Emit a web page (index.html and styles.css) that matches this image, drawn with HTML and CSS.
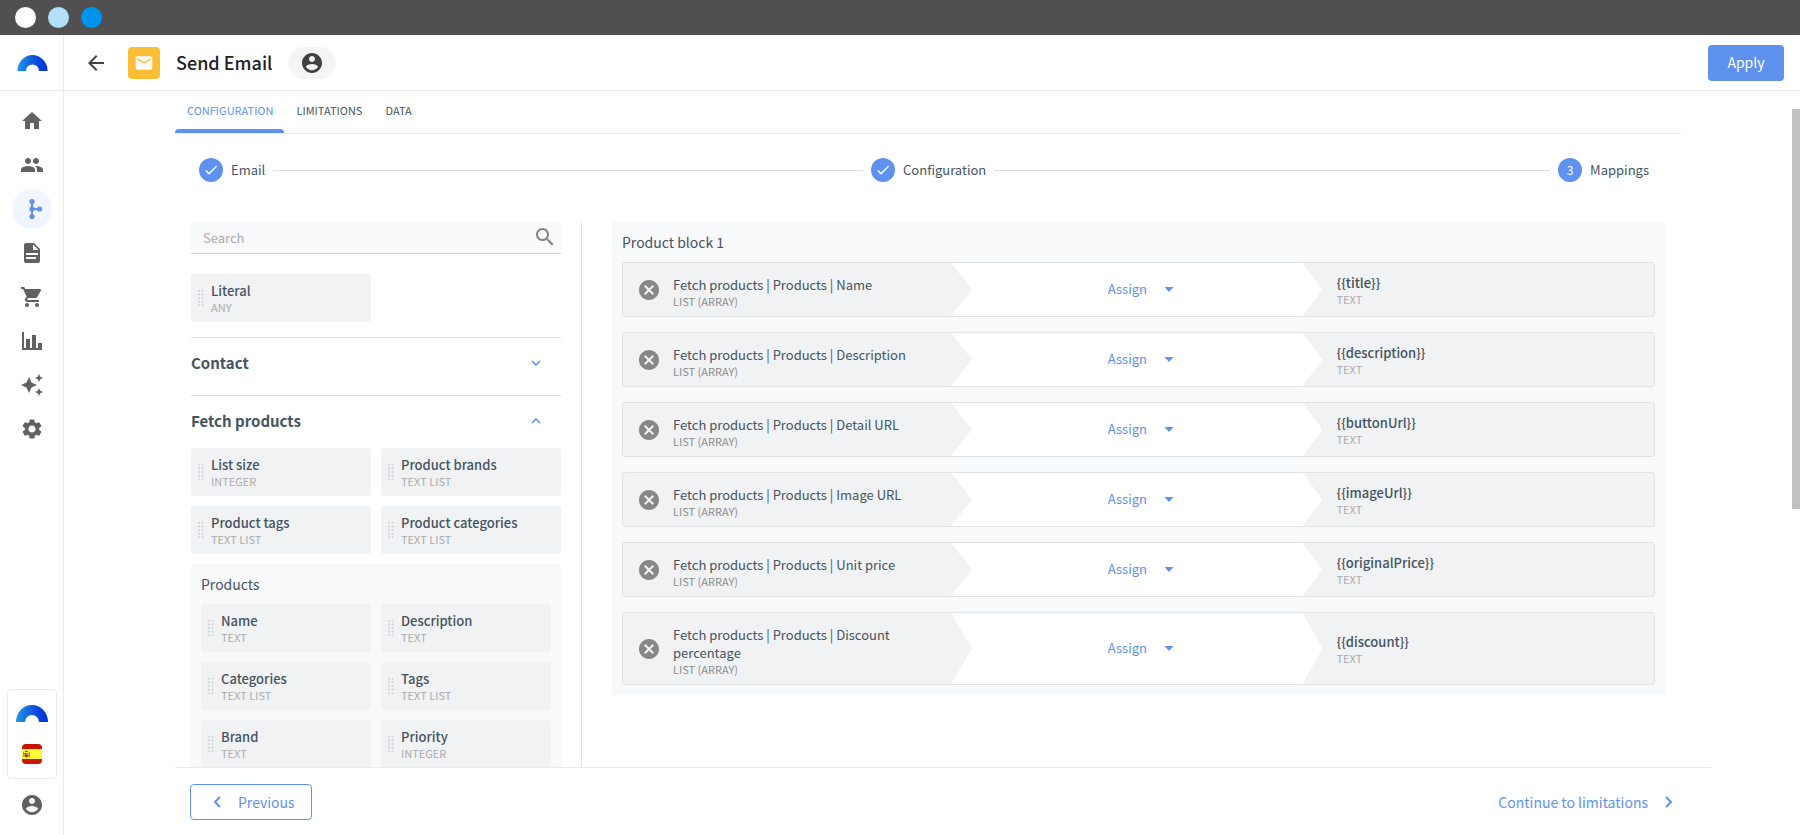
FILE: index.html
```html
<!DOCTYPE html>
<html lang="en">
<head>
<meta charset="UTF-8">
<title>Send Email</title>
<link rel="stylesheet" href="styles.css">
</head>
<body>
<svg class="defs" aria-hidden="true">
  <defs>
    <linearGradient id="arcfill" x1="0" x2="1" y1="0" y2="0">
      <stop offset="0" stop-color="#2196e8"/>
      <stop offset=".7" stop-color="#0a44dc"/>
      <stop offset="1" stop-color="#0033d6"/>
    </linearGradient>
    <symbol id="arc" viewBox="0 0 32 17">
      <path fill="url(#arcfill)" d="M0 17a16 17 0 0 1 32 0h-9a7 7 0 0 0-14 0z"/>
    </symbol>
    <symbol id="grip" viewBox="0 0 6 16">
      <path stroke="#c9cccf" stroke-width="1.6" stroke-dasharray="1.6 2" d="M1 0v16M4.600 0v16"/>
    </symbol>
    <symbol id="account" viewBox="0 0 24 24">
      <path d="M12 2C6.480 2 2 6.480 2 12s4.480 10 10 10 10-4.480 10-10S17.520 2 12 2zm0 3c1.660 0 3 1.340 3 3s-1.340 3-3 3-3-1.340-3-3 1.340-3 3-3zm0 14.200c-2.500 0-4.710-1.280-6-3.220.03-1.990 4-3.080 6-3.080 1.990 0 5.970 1.090 6 3.080-1.290 1.940-3.500 3.220-6 3.220z"/>
    </symbol>
    <symbol id="cancel" viewBox="0 0 24 24">
      <path d="M12 2C6.470 2 2 6.470 2 12s4.470 10 10 10 10-4.470 10-10S17.530 2 12 2zm5 13.590L15.590 17 12 13.410 8.410 17 7 15.590 10.590 12 7 8.410 8.410 7 12 10.590 15.590 7 17 8.410 13.410 12 17 15.590z"/>
    </symbol>
    <symbol id="check" viewBox="0 0 24 24">
      <path d="M9 16.170L4.830 12l-1.420 1.410L9 19 21 7l-1.410-1.410z"/>
    </symbol>
    <symbol id="caret" viewBox="0 0 24 24">
      <path d="M7.500 9l4.500 5 4.500-5z"/>
    </symbol>
  </defs>
</svg>

<div class="titlebar">
  <span class="dot dot-white"></span>
  <span class="dot dot-light"></span>
  <span class="dot dot-blue"></span>
</div>

<div class="app">
  <aside class="sidebar">
    <a class="logo" href="#" aria-label="Home page"><svg width="31" height="16"><use href="#arc"/></svg></a>
    <nav class="menu">
      <a href="#" aria-label="Home"><svg viewBox="0 0 24 24"><path d="M10 20v-6h4v6h5v-8h3L12 3 2 12h3v8z"/></svg></a>
      <a href="#" aria-label="Contacts"><svg viewBox="0 0 24 24"><path d="M16 11c1.660 0 2.990-1.340 2.990-3S17.660 5 16 5c-1.660 0-3 1.340-3 3s1.340 3 3 3zm-8 0c1.660 0 2.990-1.340 2.990-3S9.660 5 8 5C6.340 5 5 6.340 5 8s1.340 3 3 3zm0 2c-2.330 0-7 1.170-7 3.500V19h14v-2.500c0-2.330-4.670-3.500-7-3.500zm8 0c-.29 0-.62.02-.97.05 1.160.84 1.970 1.970 1.970 3.450V19h6v-2.500c0-2.330-4.670-3.500-7-3.500z"/></svg></a>
      <a class="active" href="#" aria-label="Workflows"><svg viewBox="0 0 24 24"><path fill="none" stroke="#5e92ee" stroke-width="2" d="M12 4v16M12 12h8"/><circle cx="12" cy="4.500" r="2.600"/><circle cx="12" cy="12" r="2.600"/><circle cx="12" cy="19.500" r="2.600"/><circle cx="19.500" cy="12" r="2.600"/></svg></a>
      <a href="#" aria-label="Content"><svg viewBox="0 0 24 24"><path d="M14 2H6c-1.100 0-1.990.9-1.990 2L4 20c0 1.100.89 2 1.990 2H18c1.100 0 2-.9 2-2V8l-6-6zm2 16H6v-2h10v2zm2-4H6v-2h12v2zm-5-5V3.500L18.500 9H13z"/></svg></a>
      <a href="#" aria-label="Products"><svg viewBox="0 0 24 24"><path d="M7 18c-1.100 0-1.990.9-1.990 2S5.900 22 7 22s2-.9 2-2-.9-2-2-2zM1 2v2h2l3.600 7.590-1.350 2.450c-.16.28-.25.61-.25.96 0 1.100.9 2 2 2h12v-2H7.420c-.14 0-.25-.11-.25-.25l.03-.12.9-1.630h7.450c.75 0 1.410-.41 1.750-1.030l3.580-6.490c.08-.14.12-.31.12-.48 0-.55-.45-1-1-1H5.210l-.94-2H1zm16 16c-1.100 0-1.990.9-1.990 2s.89 2 1.990 2 2-.9 2-2-.9-2-2-2z"/></svg></a>
      <a href="#" aria-label="Reports"><svg viewBox="0 0 24 24"><path d="M2 3h2v16h2v-9h4v9h2V6h4v13h2v-5h4v7H2z"/></svg></a>
      <a href="#" aria-label="AI"><svg viewBox="0 0 24 24"><path d="M19 9l1.250-2.750L23 5l-2.750-1.250L19 1l-1.250 2.750L15 5l2.750 1.250L19 9zm-7.500.5L9 4 6.500 9.500 1 12l5.500 2.500L9 20l2.500-5.500L17 12l-5.500-2.500zM19 15l-1.250 2.750L15 19l2.750 1.250L19 23l1.250-2.750L23 19l-2.750-1.250L19 15z"/></svg></a>
      <a href="#" aria-label="Settings"><svg viewBox="0 0 24 24"><path d="M19.140 12.940c.04-.3.06-.61.06-.94 0-.32-.02-.64-.07-.94l2.030-1.580c.18-.14.23-.41.12-.61l-1.920-3.320c-.12-.22-.37-.29-.59-.22l-2.390.96c-.5-.38-1.030-.7-1.620-.94l-.36-2.540c-.04-.24-.24-.41-.48-.41h-3.840c-.24 0-.43.17-.47.41l-.36 2.540c-.59.24-1.130.57-1.620.94l-2.390-.96c-.22-.08-.47 0-.59.22L2.740 8.870c-.12.21-.08.47.12.61l2.030 1.580c-.05.3-.09.63-.09.94s.02.64.07.94l-2.030 1.580c-.18.14-.23.41-.12.61l1.920 3.320c.12.22.37.29.59.22l2.390-.96c.5.38 1.030.7 1.620.94l.36 2.540c.05.24.24.41.48.41h3.840c.24 0 .44-.17.47-.41l.36-2.540c.59-.24 1.130-.56 1.620-.94l2.390.96c.22.08.47 0 .59-.22l1.920-3.320c.12-.22.07-.47-.12-.61l-2.010-1.580zM12 15.600c-1.980 0-3.600-1.620-3.600-3.600s1.620-3.600 3.600-3.600 3.600 1.620 3.600 3.600-1.620 3.600-3.600 3.600z"/></svg></a>
    </nav>
    <div class="workspace">
      <svg width="32" height="17"><use href="#arc"/></svg>
      <svg class="flag" width="20" height="20" viewBox="0 0 20 20">
        <path fill="#c81400" d="M0 0h20v20H0z"/>
        <path fill="#ffff33" d="M0 5h20v10H0z"/>
        <path fill="#b98a4a" d="M1 8h1v5H1zM7 8h1v5H7z"/>
        <path fill="#b5322a" d="M3 7h3v1H3zM2.500 9h4v3.500l-2 1-2-1z"/>
        <path fill="#d98f86" d="M4.500 9h2v2h-2z"/>
      </svg>
    </div>
    <a class="profile" href="#" aria-label="Profile"><svg><use href="#account"/></svg></a>
  </aside>

  <main class="main">
    <header class="header">
      <button class="back" type="button" aria-label="Back"><svg viewBox="0 0 24 24"><path d="M20 11H7.830l5.590-5.590L12 4l-8 8 8 8 1.410-1.410L7.830 13H20v-2z"/></svg></button>
      <span class="mail"><svg viewBox="0 0 24 24"><path d="M20 4H4c-1.100 0-1.990.9-1.990 2L2 18c0 1.100.9 2 2 2h16c1.100 0 2-.9 2-2V6c0-1.100-.9-2-2-2zm0 4l-8 5-8-5V6l8 5 8-5v2z"/></svg></span>
      <h1>Send Email</h1>
      <button class="owner" type="button" aria-label="Owner"><svg><use href="#account"/></svg></button>
      <button class="apply" type="button">Apply</button>
    </header>

    <div class="body">
      <nav class="tabs">
        <a class="selected" href="#">CONFIGURATION</a>
        <a href="#">LIMITATIONS</a>
        <a href="#">DATA</a>
      </nav>

      <ol class="stepper">
        <li class="step-first"><span class="bullet"><svg><use href="#check"/></svg></span>Email</li>
        <li class="step-second"><span class="bullet"><svg><use href="#check"/></svg></span>Configuration</li>
        <li><span class="bullet">3</span>Mappings</li>
      </ol>

      <div class="columns">
        <section class="fields">
          <label class="search">
            <input type="text" placeholder="Search" aria-label="Search">
            <svg viewBox="0 0 24 24"><path d="M15.500 14h-.79l-.28-.27C15.410 12.590 16 11.110 16 9.500 16 5.910 13.090 3 9.500 3S3 5.910 3 9.500 5.910 16 9.500 16c1.610 0 3.090-.59 4.230-1.570l.27.28v.79l5 4.990L20.490 19l-4.990-5zm-6 0C7.010 14 5 11.990 5 9.500S7.010 5 9.500 5 14 7.010 14 9.500 11.990 14 9.500 14z"/></svg>
          </label>

          <div class="cards literal">
            <div class="card"><svg><use href="#grip"/></svg><p><b>Literal</b><small>ANY</small></p></div>
          </div>

          <div class="group">
            <h2>Contact <button type="button" aria-label="Expand Contact"><svg viewBox="0 0 10 6"><path d="M1 1l4 4 4-4"/></svg></button></h2>
          </div>

          <div class="group">
            <h2>Fetch products <button type="button" aria-label="Collapse Fetch products"><svg viewBox="0 0 10 6"><path d="M1 5l4-4 4 4"/></svg></button></h2>
            <div class="cards">
              <div class="card"><svg><use href="#grip"/></svg><p><b>List size</b><small>INTEGER</small></p></div>
              <div class="card"><svg><use href="#grip"/></svg><p><b>Product brands</b><small>TEXT LIST</small></p></div>
              <div class="card"><svg><use href="#grip"/></svg><p><b>Product tags</b><small>TEXT LIST</small></p></div>
              <div class="card"><svg><use href="#grip"/></svg><p><b>Product categories</b><small>TEXT LIST</small></p></div>
            </div>
            <div class="block">
              <h3>Products</h3>
              <div class="cards">
                <div class="card"><svg><use href="#grip"/></svg><p><b>Name</b><small>TEXT</small></p></div>
                <div class="card"><svg><use href="#grip"/></svg><p><b>Description</b><small>TEXT</small></p></div>
                <div class="card"><svg><use href="#grip"/></svg><p><b>Categories</b><small>TEXT LIST</small></p></div>
                <div class="card"><svg><use href="#grip"/></svg><p><b>Tags</b><small>TEXT LIST</small></p></div>
                <div class="card"><svg><use href="#grip"/></svg><p><b>Brand</b><small>TEXT</small></p></div>
                <div class="card"><svg><use href="#grip"/></svg><p><b>Priority</b><small>INTEGER</small></p></div>
              </div>
            </div>
          </div>
        </section>

        <section class="mappings">
          <div class="block">
            <h3>Product block 1</h3>
            <div class="rows" id="rows"></div>
          </div>
        </section>
      </div>
      <div class="scrollbar"></div>
    </div>

    <footer class="footer">
      <button class="previous" type="button"><svg viewBox="0 0 8 12"><path d="M7 1L2 6l5 5"/></svg>Previous</button>
      <a class="next" href="#">Continue to limitations<svg viewBox="0 0 8 12"><path d="M1 1l5 5-5 5"/></svg></a>
    </footer>
  </main>
</div>

<script>
const mappings = [
  ['Name', 'title'],
  ['Description', 'description'],
  ['Detail URL', 'buttonUrl'],
  ['Image URL', 'imageUrl'],
  ['Unit price', 'originalPrice'],
  ['Discount percentage', 'discount']
];

const rows = document.getElementById('rows');
mappings.forEach(([field, target]) => {
  const row = document.createElement('div');
  row.className = 'row';
  row.innerHTML = `
    <div class="source">
      <button type="button" aria-label="Remove ${field}"><svg><use href="#cancel"/></svg></button>
      <p>Fetch products | Products | ${field}<small>LIST (ARRAY)</small></p>
    </div>
    <div class="assign">
      <select aria-label="Action for ${target}"><option>Assign</option></select>
      <svg><use href="#caret"/></svg>
    </div>
    <div class="target"><p><b>{{${target}}}</b><small>TEXT</small></p></div>
  `;
  rows.appendChild(row);
});
</script>
</body>
</html>
```
FILE: styles.css
```css
* {
  box-sizing: border-box;
}
body {
  margin: 0;
  height: 100vh;
  display: flex;
  flex-direction: column;
  overflow: hidden;
  background: #fff;
  color: #455460;
  font-family: "Noto Sans CJK SC", sans-serif;
  font-size: 13px;
  line-height: 18px;
}
h1, h2, h3, p, ol {
  margin: 0;
  padding: 0;
}
a {
  color: inherit;
  text-decoration: none;
}
button, input, select {
  font: inherit;
  color: inherit;
  border: 0;
  background: none;
  padding: 0;
  margin: 0;
}
button {
  cursor: pointer;
}
svg {
  display: block;
  flex: none;
}
b {
  display: block;
  font-weight: 500;
}
small {
  display: block;
  font-size: 11px;
  line-height: 14px;
  color: #a9abad;
}
.defs {
  position: absolute;
  width: 0;
  height: 0;
}

.titlebar {
  flex: none;
  height: 35px;
  padding: 0 15px;
  display: flex;
  align-items: center;
  gap: 12px;
  background: #505050;
}
.dot {
  width: 21px;
  height: 21px;
  border-radius: 50%;
}
.dot-white { background: #fff; }
.dot-light { background: #b3dff8; }
.dot-blue { background: #0093ec; }

.app {
  flex: 1;
  min-height: 0;
  display: flex;
}

/* sidebar */
.sidebar {
  flex: none;
  width: 64px;
  display: flex;
  flex-direction: column;
  align-items: center;
  border-right: 1px solid #ebebeb;
}
.logo {
  width: 100%;
  height: 56px;
  padding-left: 2px;
  display: flex;
  align-items: center;
  justify-content: center;
  border-bottom: 1px solid #ebebeb;
}
.menu {
  margin-top: 10px;
  display: flex;
  flex-direction: column;
  gap: 4px;
}
.menu a {
  width: 40px;
  height: 40px;
  display: flex;
  align-items: center;
  justify-content: center;
  border-radius: 50%;
}
.menu svg, .profile svg {
  width: 24px;
  height: 24px;
  fill: #616161;
}
.menu .active {
  background: #f0f5fe;
}
.menu .active svg {
  fill: #5e92ee;
}
.workspace {
  width: 50px;
  height: 90px;
  margin-top: auto;
  padding-top: 15px;
  display: flex;
  flex-direction: column;
  align-items: center;
  gap: 22px;
  border: 1px solid #ebebeb;
  border-radius: 4px;
}
.flag {
  border-radius: 4px;
}
.profile {
  margin: 14px 0 18px;
}

/* header */
.main {
  flex: 1;
  min-width: 0;
  display: flex;
  flex-direction: column;
}
.header {
  flex: none;
  height: 56px;
  padding: 0 16px 0 20px;
  display: flex;
  align-items: center;
  border-bottom: 1px solid #ebebeb;
}
.back svg, .owner svg {
  width: 24px;
  height: 24px;
  fill: #424242;
}
.mail {
  width: 32px;
  height: 32px;
  margin: 0 16px 0 20px;
  display: flex;
  align-items: center;
  justify-content: center;
  border-radius: 4px;
  background: #f9be34;
}
.mail svg {
  width: 20px;
  height: 20px;
  fill: #fafafa;
}
h1 {
  padding-bottom: 2px;
  font-size: 18px;
  line-height: 24px;
  font-weight: 500;
  color: #212121;
}
.owner {
  width: 48px;
  height: 32px;
  margin-left: 16px;
  display: flex;
  align-items: center;
  justify-content: center;
  border-radius: 16px;
  background: #f5f5f5;
}
.apply {
  width: 76px;
  height: 36px;
  margin-left: auto;
  padding-bottom: 2px;
  border-radius: 4px;
  background: #5e92ee;
  color: #fff;
  font-size: 14px;
}

/* tabs and steps */
.body {
  flex: 1;
  min-height: 0;
  position: relative;
  display: flex;
  flex-direction: column;
  padding: 0 119px 0 111px;
}
.scrollbar {
  position: absolute;
  top: 18px;
  right: 0;
  width: 8px;
  height: 400px;
  background: #c1c1c1;
}
.tabs {
  flex: none;
  height: 43px;
  display: flex;
  border-bottom: 1px solid #ebebeb;
}
.tabs a {
  padding: 10px 11px 0 12px;
  font-size: 11px;
}
.tabs .selected {
  position: relative;
  color: #5e92ee;
}
.tabs .selected::after {
  content: "";
  position: absolute;
  left: 0;
  right: 0;
  bottom: 0;
  height: 4px;
  border-radius: 4px 4px 0 0;
  background: #5e92ee;
}
.stepper {
  flex: none;
  margin: 24px 32px 40px 24px;
  display: flex;
  gap: 8px;
  list-style: none;
}
.stepper li {
  display: flex;
  align-items: center;
  gap: 8px;
}
.stepper .step-first {
  flex: 665;
}
.stepper .step-second {
  flex: 680;
}
.step-first::after, .step-second::after {
  content: "";
  flex: 1;
  height: 1px;
  background: #dcdee0;
}
.bullet {
  width: 24px;
  height: 24px;
  display: flex;
  align-items: center;
  justify-content: center;
  border-radius: 50%;
  background: #5e92ee;
  color: #fff;
  font-size: 12px;
}
.bullet svg {
  width: 16px;
  height: 16px;
  fill: #fff;
}

/* columns */
.columns {
  flex: 1;
  min-height: 0;
  overflow: hidden;
  display: flex;
  margin: 0 16px;
}
.fields {
  flex: none;
  width: 391px;
  padding-right: 20px;
  border-right: 1px solid #e0e2e3;
}
.mappings {
  flex: 1;
  padding-left: 30px;
}
.search {
  display: flex;
  height: 32px;
  padding: 0 4px 0 12px;
  border-bottom: 1px solid #c9cfd4;
  background: #f8f9fb;
}
.search input {
  flex: 1;
  min-width: 0;
  outline: 0;
}
.search input::placeholder {
  color: #a9abad;
}
.search svg {
  width: 24px;
  height: 24px;
  margin-top: 3px;
  fill: #858585;
}
.cards {
  display: grid;
  grid-template-columns: 1fr 1fr;
  gap: 10px;
}
.literal {
  margin: 20px 0 15px;
}
.card {
  height: 48px;
  padding: 0 7px;
  display: flex;
  align-items: center;
  gap: 7px;
  border-radius: 3px;
  background: #f1f2f4;
}
.card svg {
  width: 6px;
  height: 16px;
}
.group {
  padding-bottom: 7px;
  border-top: 1px solid #e0e2e3;
}
.group > .cards {
  margin: 2px 0 10px;
}
h2 {
  height: 50px;
  padding-right: 20px;
  display: flex;
  align-items: center;
  justify-content: space-between;
  font-size: 15px;
  font-weight: 700;
}
h2 svg {
  width: 10px;
  height: 6px;
  fill: none;
  stroke: #5e92ee;
  stroke-width: 1.5;
}
.block {
  padding: 0 10px 10px;
  background: #f8f9fb;
}
h3 {
  height: 40px;
  font-size: 14px;
  line-height: 41px;
  font-weight: 400;
}

/* mapping rows */
.rows {
  display: flex;
  flex-direction: column;
  gap: 15px;
}
.row {
  display: grid;
  grid-template-columns: 28fr 30fr 30fr;
  border: 1px solid #e0e2e3;
  border-radius: 3px;
  background: #f1f2f4;
}
.source {
  padding: 6px 20px 6px 14px;
  display: flex;
  align-items: center;
  gap: 12px;
}
.source p {
  padding: 7px 0 2px;
}
.source small {
  color: #8a8c8e;
}
.source svg {
  width: 24px;
  height: 24px;
  fill: #858789;
}
.assign {
  margin-right: -20px;
  padding-left: 15px;
  display: flex;
  align-items: center;
  justify-content: center;
  background: #fff;
  clip-path: polygon(0 0, calc(100% - 20px) 0, 100% 50%, calc(100% - 20px) 100%, 0 100%, 21px 50%);
  color: #5e92ee;
}
.assign select {
  appearance: none;
  padding: 0 33px 1px 0;
}
.assign svg {
  width: 24px;
  height: 24px;
  margin-left: -24px;
  fill: #5e92ee;
  pointer-events: none;
}
.target {
  padding-left: 34px;
  display: flex;
  align-items: center;
}

/* footer */
.footer {
  flex: none;
  height: 68px;
  margin: 0 89px 0 111px;
  padding: 0 38px 0 15px;
  display: flex;
  align-items: center;
  justify-content: space-between;
  border-top: 1px solid #ebebeb;
  color: #5e92ee;
  font-size: 14px;
}
.footer svg {
  width: 8px;
  height: 12px;
  fill: none;
  stroke: #5e92ee;
  stroke-width: 2;
}
.previous {
  width: 122px;
  height: 36px;
  padding-left: 22px;
  display: flex;
  align-items: center;
  gap: 17px;
  border: 1px solid #5e92ee;
  border-radius: 4px;
}
.next {
  display: flex;
  align-items: center;
  gap: 17px;
}
```
